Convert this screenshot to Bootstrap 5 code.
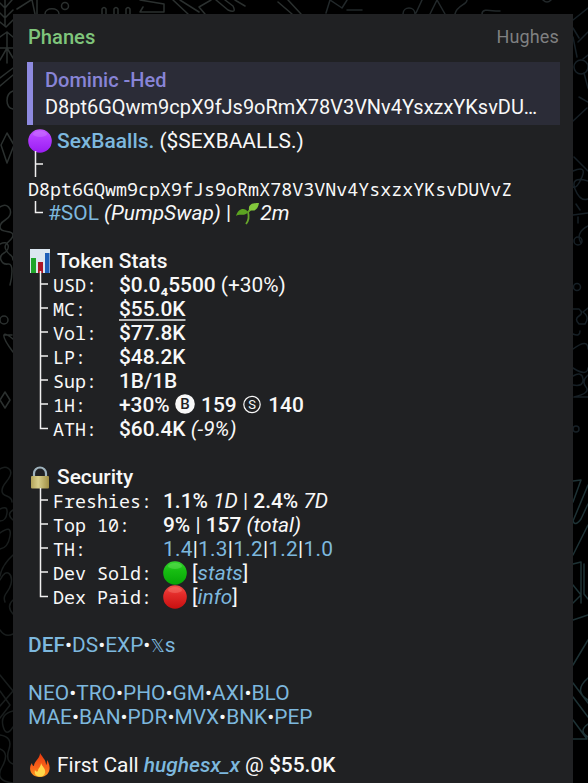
<!DOCTYPE html>
<html lang="en">
<head>
<meta charset="utf-8">
<meta name="viewport" content="width=device-width, initial-scale=1">
<title>Phanes</title>
<link href="https://cdn.jsdelivr.net/npm/bootstrap@5.3.0/dist/css/bootstrap.min.css" rel="stylesheet">
<style>
body{background:#000;color:#f8f8f8;font:400 20px/24px Roboto,"Liberation Sans",sans-serif;height:783px}
.backdrop{z-index:-1}
.bubble{background:#202123;width:560px;height:769px;margin:14px 0 0 13px;padding:0 14px 0 15px}
.topbar{height:46px}
.sender{color:#7fc57b;font-weight:500;font-size:20.15px}
.forward{color:#7f8081;font-size:18px;letter-spacing:.15px}
.quote{background:#2b2c37;border-left:6px solid #8e8ae0;height:63px;margin:2px -1px 0 -1px;padding:5px 0 0 12px;line-height:27px}
.quote-name{color:#8884d6;font-weight:500}
.quote-text{font-size:19.97px}
.message{padding-top:4px;font-size:20.9px}
.line{height:24px;white-space:pre}
.gap-row{height:24px}
.lk{color:#7db8de}
b,.med{font-weight:500}
.code{font-family:"Noto Sans Mono","DejaVu Sans Mono",monospace;font-size:18.35px}
.emo{width:24px;height:24px;flex:none;margin-right:5px}
.branch{width:25px;height:24px;flex:none}
.branch-short{width:20px}
.tick{fill:none;stroke:#f0f0f0;stroke-width:1.5}
.key4{width:66px;flex:none}
.key9{width:110px;flex:none}
.dot-icon{width:24px;height:24px;flex:none;margin-right:5px}
.coin{width:20px;height:20px;flex:none;margin:1px 1px 0 0}
.und{text-decoration:underline;text-decoration-thickness:1.5px;text-underline-offset:3px;text-decoration-color:#bbb}
.holders{letter-spacing:.25px}
.dbl{font-family:"DejaVu Sans",sans-serif;font-size:17.8px}
</style>
</head>
<body class="overflow-hidden position-relative">
<svg class="backdrop position-absolute top-0 start-0" width="588" height="783" fill="none" stroke="#1f2324" stroke-width="1.5" stroke-linecap="round" stroke-linejoin="round">
<g stroke="#2b302f">
<path d="M5 0V26M0 3l5 5 7-8M0 13l5 5 8-8M0 22l6 5 7-7M32 0l3 14M37 0v14M17 9L31 0M0 37l7-5 6 5M0 48h13M7 32v31M0 60l7-12 6 10M0 78l13-10M0 86l13-11M13 91c-8 3-8 16 0 18"/>
<path d="M45 14c0-7 14-7 14 0"/><circle cx="65" cy="6" r="3.5"/>
<path d="M102 14V9q2-3 4 0v5M114 14V9q2-3 4 0v5M126 14V9q2-3 4 0v5M140 0l24 4v8h-24l3-5M173 0l15 14M180 0l19 12M205 14l-6-7 12-7M216 0l12 10q9 4 5-4l-8-6M235 0l10 6M292 14l-14-12M288 0l13 14"/>
<path stroke="#22282a" d="M326 13l4-13 12 8 5-8M347 10h15M403 14c0-8 12-8 12 0M422 0l-6 13M430 14l7-14 8 14M455 14c2-9 12-9 12-14M482 14c0-7 12-2 18-3M543 0q4 4 8 0"/>
<path d="M7 133l7 12-7 18-6-18zM0 207c7-5 12 2 10 8s-10 5-10 12 13 2 13 8-11 8-7 15 7 4 7 10M0 244c9-5 11 5 4 9s-2 12 4 11 4 13 2 21"/>
<circle cx="4" cy="320" r="4"/><path d="M5 335h7M13 352c-15-20-9-21 0-13M5 392l5 8-5 8-5-8z"/>
</g>
<g stroke="#191d1d"><path d="M0 469c6-4 13 0 10 7s-8 8-8 15 10 3 10 11M0 509q8-4 7 4t-7 8M13 510q-7 4 0 10M0 533q12-9 10 3T0 549M13 555q-11 10-13 21M0 580c7-14 13-5 11 4s-9 10-6 18M13 600q-7 6 0 14M0 630q5 8 13 4M0 675l13 16-13 15M0 691l10 14-10 13M13 711q-13 3-10 15t10 1M0 735q13 2 9 14t4 15M0 749q10 4 2 18t11 16"/></g>
<g stroke="#172026">
<path d="M588 8l-15 12M573 28l6 10M588 32l-10 10M577 57l-4-20M588 55l-5 4M584 73l4 15M588 102l-9-5M573 121l14-13M574 157l14 14M573 171q14-6 9 6t-9 10M588 181q-18-5-13 8t13 10M576 204l4 6M573 215l15-2M578 217v6M588 226q-13 7-7 17"/>
<circle cx="581" cy="67" r="7"/><circle cx="578" cy="241" r="4"/><circle cx="577" cy="287" r="3.5"/><circle cx="576" cy="429" r="3"/>
<path d="M573 309h6q5 4 0 7t0 8h6q5-7-2-12l5-4M573 334q7 3 7-3M573 349q15-11 15 0M573 368q14 9 15 0M573 376q9-5 10 3t-10 6M588 375q-7 6-2 12t-12 10M574 397h14"/>
</g>
<g stroke="#1e3235"><path d="M573 481l8-1-8 22M588 485l-15 36q2 6 8-2l7-15M588 525l-15 30M573 564l8-2v41M584 564v30l4 5M573 585l8 10-8 8M588 615l-15 5M588 640l-15 25M573 683l15 20M573 697l15 20M588 678q-15 13 0 22M573 739h14l-14-19M588 724q-10 7 0 13"/></g>
</svg>

<main class="bubble">
  <header class="topbar d-flex justify-content-between align-items-center">
    <span class="sender">Phanes</span><span class="forward">Hughes</span>
  </header>
  <section class="quote">
    <div class="quote-name">Dominic -Hed</div>
    <div class="quote-text">D8pt6GQwm9cpX9fJs9oRmX78V3VNv4YsxzxYKsvDU…</div>
  </section>
  <section class="message">
    <div class="line d-flex"><svg class="emo" viewBox="0 0 24 24"><defs><linearGradient id="pu" x2="0" y2="1"><stop stop-color="#c45bff"/><stop offset=".35" stop-color="#b33cff"/><stop offset="1" stop-color="#9a1df2"/></linearGradient></defs><circle cx="12" cy="12" r="11.8" fill="url(#pu)"/><ellipse cx="12" cy="5" rx="7" ry="3" fill="#d58cff" opacity=".35"/></svg><span><b class="lk">SexBaalls.</b> ($SEXBAALLS.)</span></div>
    <div class="line"><svg class="branch d-block overflow-visible" viewBox="0 0 25 24"><path class="tick" d="M7.500-2V24M7.500 11h7.500"/></svg></div>
    <div class="line code">D8pt6GQwm9cpX9fJs9oRmX78V3VNv4YsxzxYKsvDUVvZ</div>
    <div class="line d-flex"><svg class="branch branch-short" viewBox="0 0 20 24"><path class="tick" d="M7.500 0V11.500H15"/></svg><span class="ms-0"><span class="lk">#SOL</span> <i>(PumpSwap)</i> | </span><svg class="seed" width="24" height="24" viewBox="0 0 24 24"><path d="M10 23q4-5 2-12l3-3" fill="none" stroke="#67a52b" stroke-width="1.800"/><path d="M0 15C2 7 9 6 12 11 9 16 4 12 0 15z" fill="#5ca421"/><path d="M13 9C12 3 17 2 23 2 22 8 19 11 13 9z" fill="#83c83c"/></svg><i>2m</i></div>
    <div class="gap-row"></div>

    <div class="line d-flex"><svg class="emo" viewBox="0 0 24 24"><path d="M2 0H22V24H2z" fill="#dbe6f0"/><path d="M3 9H8V24H3z" fill="#20a52b"/><path d="M10 13H15V24H10z" fill="#ac1626"/><path d="M17 4H21.500V24H17z" fill="#1d5eb8"/></svg><b>Token Stats</b></div>
    <div class="line d-flex"><svg class="branch overflow-visible" viewBox="0 0 25 24"><path class="tick" d="M12.500-2V24M12.500 11H20"/></svg><span class="code key4">USD:</span><span><b>$0.0₄5500</b> (+30%)</span></div>
    <div class="line d-flex"><svg class="branch" viewBox="0 0 25 24"><path class="tick" d="M12.500 0V24M12.500 11H20"/></svg><span class="code key4">MC:</span><b class="und">$55.0K</b></div>
    <div class="line d-flex"><svg class="branch" viewBox="0 0 25 24"><path class="tick" d="M12.500 0V24M12.500 11H20"/></svg><span class="code key4">Vol:</span><b>$77.8K</b></div>
    <div class="line d-flex"><svg class="branch" viewBox="0 0 25 24"><path class="tick" d="M12.500 0V24M12.500 11H20"/></svg><span class="code key4">LP:</span><b>$48.2K</b></div>
    <div class="line d-flex"><svg class="branch" viewBox="0 0 25 24"><path class="tick" d="M12.500 0V24M12.500 11H20"/></svg><span class="code key4">Sup:</span><b>1B/1B</b></div>
    <div class="line d-flex"><svg class="branch" viewBox="0 0 25 24"><path class="tick" d="M12.500 0V24M12.500 11H20"/></svg><span class="code key4">1H:</span><b>+30% </b><svg class="coin" viewBox="0 0 20 20"><circle cx="10" cy="10" r="9.800" fill="#f8f8f8"/><text x="10" y="15.300" text-anchor="middle" font-family="Roboto" font-size="15" font-weight="500" fill="#202123">B</text></svg><b> 159 </b><svg class="coin" viewBox="0 0 20 20"><circle cx="10" cy="10.500" r="8.200" fill="none" stroke="#f8f8f8" stroke-width="1.200"/><text x="10" y="15" text-anchor="middle" font-family="Roboto" font-size="13" fill="#f8f8f8">S</text></svg><b> 140</b></div>
    <div class="line d-flex"><svg class="branch" viewBox="0 0 25 24"><path class="tick" d="M12.500 0V11.500H20"/></svg><span class="code key4">ATH:</span><span><b>$60.4K</b> <i>(-9%)</i></span></div>
    <div class="gap-row"></div>

    <div class="line d-flex"><svg class="emo" viewBox="0 0 24 24"><defs><linearGradient id="go"><stop stop-color="#b3a45a"/><stop offset=".4" stop-color="#d9cf8b"/><stop offset="1" stop-color="#a08f45"/></linearGradient></defs><path d="M6 13V8.500a6 6 0 0 1 12 0V13" fill="none" stroke="#9fb3bd" stroke-width="2.200"/><rect x="3" y="11" width="18" height="12.500" rx="1" fill="url(#go)"/></svg><b>Security</b></div>
    <div class="line d-flex"><svg class="branch overflow-visible" viewBox="0 0 25 24"><path class="tick" d="M12.500-1V24M12.500 11H20"/></svg><span class="code key9">Freshies:</span><span><b>1.1%</b> <i>1D</i> | <b>2.4%</b> <i>7D</i></span></div>
    <div class="line d-flex"><svg class="branch" viewBox="0 0 25 24"><path class="tick" d="M12.500 0V24M12.500 11H20"/></svg><span class="code key9">Top 10:</span><span><b>9%</b> | <b>157</b> <i>(total)</i></span></div>
    <div class="line d-flex"><svg class="branch" viewBox="0 0 25 24"><path class="tick" d="M12.500 0V24M12.500 11H20"/></svg><span class="code key9">TH:</span><span class="holders"><span class="lk">1.4</span>|<span class="lk">1.3</span>|<span class="lk">1.2</span>|<span class="lk">1.2</span>|<span class="lk">1.0</span></span></div>
    <div class="line d-flex"><svg class="branch" viewBox="0 0 25 24"><path class="tick" d="M12.500 0V24M12.500 11H20"/></svg><span class="code key9">Dev Sold:</span><svg class="dot-icon" viewBox="0 0 24 24"><defs><linearGradient id="gr" x2="0" y2="1"><stop stop-color="#35d42f"/><stop offset=".4" stop-color="#17bd12"/><stop offset="1" stop-color="#06a506"/></linearGradient></defs><circle cx="12" cy="12" r="11.800" fill="url(#gr)"/><ellipse cx="12" cy="5" rx="7" ry="3" fill="#8bef7d" opacity=".3"/></svg><span>[<i class="lk">stats</i>]</span></div>
    <div class="line d-flex"><svg class="branch" viewBox="0 0 25 24"><path class="tick" d="M12.500 0V11.500H20"/></svg><span class="code key9">Dex Paid:</span><svg class="dot-icon" viewBox="0 0 24 24"><defs><linearGradient id="re" x2="0" y2="1"><stop stop-color="#f34e48"/><stop offset=".4" stop-color="#e22b29"/><stop offset="1" stop-color="#c80f10"/></linearGradient></defs><circle cx="12" cy="12" r="11.800" fill="url(#re)"/><ellipse cx="12" cy="5" rx="7" ry="3" fill="#ff9a90" opacity=".3"/></svg><span>[<i class="lk">info</i>]</span></div>
    <div class="gap-row"></div>

    <div class="line"><b class="lk">DEF</b>•<span class="lk">DS</span>•<span class="lk">EXP</span>•<span class="lk"><span class="dbl">𝕏</span>s</span></div>
    <div class="gap-row"></div>
    <div class="line"><span class="lk">NEO</span>•<span class="lk">TRO</span>•<span class="lk">PHO</span>•<span class="lk">GM</span>•<span class="lk">AXI</span>•<span class="lk">BLO</span></div>
    <div class="line"><span class="lk">MAE</span>•<span class="lk">BAN</span>•<span class="lk">PDR</span>•<span class="lk">MVX</span>•<span class="lk">BNK</span>•<span class="lk">PEP</span></div>
    <div class="gap-row"></div>
    <div class="line d-flex"><svg class="emo" viewBox="0 0 24 24"><defs><linearGradient id="fl" x2="0" y2="1"><stop stop-color="#e8380d"/><stop offset=".6" stop-color="#f9641b"/><stop offset="1" stop-color="#ff9c20"/></linearGradient></defs><path d="M12 0C15 5 18 7 18 12 19 11 19 9 19 7 24 14 22 24 12 24 2 24 0 15 4 10 4 12 5 13 6 13 6 8 12 6 12 0z" fill="url(#fl)"/><path d="M13 10C14 14 18 15 17 20 16 23 14 23.500 12 23.500 8 23.500 6 21 7 17 8 19 9 19 10 18 10 15 13 14 13 10z" fill="#ffd84a"/></svg><span>First Call <b class="lk"><i>hughesx_x</i></b> @ <b>$55.0K</b></span></div>
  </section>
</main>
<script src="https://cdn.jsdelivr.net/npm/bootstrap@5.3.0/dist/js/bootstrap.bundle.min.js"></script>
</body>
</html>
